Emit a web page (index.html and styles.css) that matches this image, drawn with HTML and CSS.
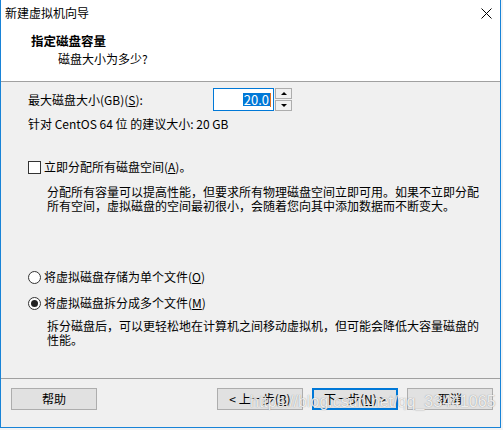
FILE: index.html
```html
<!DOCTYPE html>
<html lang="zh-CN">
<head>
    <meta charset="UTF-8">
    <title>新建虚拟机向导</title>
    <link rel="stylesheet" href="styles.css">
</head>
<body>
    <div class="window">
        <div class="titleBar">
            <span class="titleText">新建虚拟机向导</span>
            <svg class="closeIcon" width="11" height="11" viewBox="0 0 11 11">
                <path d="M0.5 0.5 L10.5 10.5 M10.5 0.5 L0.5 10.5" stroke="#000" stroke-width="1" fill="none"/>
            </svg>
        </div>

        <div class="header">
            <div class="headTitle">指定磁盘容量</div>
            <div class="headSub">磁盘大小为多少?</div>
        </div>

        <div class="content">
            <div class="sizeRow">
                <span class="sizeLabel">最大磁盘大小(GB)(<u>S</u>):</span>
                <div class="numBox"><span class="selected">20.0</span><span class="caret"></span></div>
                <div class="spinner">
                    <div class="spinBtn"><span class="arrowUp"></span></div>
                    <div class="spinBtn"><span class="arrowDown"></span></div>
                </div>
            </div>
            <div class="recommend">针对 CentOS 64 位 的建议大小: 20 GB</div>

            <div class="checkRow">
                <span class="checkBox"></span>
                <span>立即分配所有磁盘空间(<u>A</u>)。</span>
            </div>
            <div class="desc first">分配所有容量可以提高性能，但要求所有物理磁盘空间立即可用。如果不立即分配所有空间，虚拟磁盘的空间最初很小，会随着您向其中添加数据而不断变大。</div>

            <div class="radioRow single">
                <span class="radio"></span>
                <span>将虚拟磁盘存储为单个文件(<u>O</u>)</span>
            </div>
            <div class="radioRow multi">
                <span class="radio checked"></span>
                <span>将虚拟磁盘拆分成多个文件(<u>M</u>)</span>
            </div>
            <div class="desc second">拆分磁盘后，可以更轻松地在计算机之间移动虚拟机，但可能会降低大容量磁盘的性能。</div>
        </div>

        <div class="footer">
            <button class="btn">帮助</button>
            <div class="btnGroup">
                <button class="btn">&lt; 上一步(<u>B</u>)</button>
                <button class="btn primary">下一步(<u>N</u>) &gt;</button>
                <button class="btn">取消</button>
            </div>
            <div class="watermark">https://blog.csdn.net/qq_33441065</div>
        </div>
    </div>
</body>
</html>
```

FILE: styles.css
```css
body {
    margin: 0;
    background: #f3f3f3;
    font-family: "Noto Sans CJK SC", "Noto Sans", sans-serif;
    font-size: 12px;
    color: #000;
}
u {
    text-decoration: underline;
    text-underline-offset: 1px;
}
.window {
    width: 501px;
    height: 428px;
    box-sizing: border-box;
    border: 1px solid #1883d7;
    border-top: none;
    background: #f0f0f0;
    display: flex;
    flex-direction: column;
    position: relative;
}
.titleBar {
    height: 26px;
    background: #fff;
    display: flex;
    align-items: center;
    justify-content: space-between;
    padding-left: 4px;
    line-height: 18px;
}
.closeIcon {
    margin-right: 8px;
}
.header {
    height: 49px;
    background: #fff;
    padding: 6px 0 0 30px;
    border-bottom: 1px solid #a0a0a0;
    line-height: 18px;
}
.headTitle {
    font-weight: 700;
    font-size: 12.5px;
}
.headSub {
    padding-left: 27px;
}
.content {
    flex: 1;
    padding-left: 27px;
    line-height: 18px;
}
.sizeRow {
    margin-top: 6px;
    height: 23px;
    display: flex;
    align-items: center;
}
.sizeLabel {
    width: 185px;
}
.numBox {
    width: 61px;
    height: 23px;
    box-sizing: border-box;
    border: 1px solid #0078d7;
    background: #fff;
    display: flex;
    align-items: center;
    justify-content: flex-end;
    padding-right: 2px;
}
.selected {
    background: #0078d7;
    color: #fff;
    line-height: 13px;
    font-size: 13px;
    padding: 0 1px;
}
.caret {
    width: 1px;
    height: 14px;
    background: #e07020;
}
.spinner {
    margin-left: 1px;
    width: 17px;
    height: 23px;
    display: flex;
    flex-direction: column;
    gap: 1px;
}
.spinBtn {
    flex: 1;
    box-sizing: border-box;
    border: 1px solid #adadad;
    background: #f0f0f0;
    display: flex;
    align-items: center;
    justify-content: center;
}
.arrowUp, .arrowDown {
    width: 0;
    height: 0;
    border-left: 3px solid transparent;
    border-right: 3px solid transparent;
}
.arrowUp {
    border-bottom: 3px solid #000;
}
.arrowDown {
    border-top: 3px solid #000;
}
.recommend {
    margin-top: 4px;
}
.checkRow, .radioRow {
    display: flex;
    align-items: center;
    gap: 3px;
    height: 18px;
}
.checkRow {
    margin-top: 25px;
}
.checkBox {
    width: 13px;
    height: 13px;
    box-sizing: border-box;
    border: 1px solid #333;
    background: #fff;
}
.radio {
    width: 13px;
    height: 13px;
    box-sizing: border-box;
    border: 1px solid #333;
    border-radius: 50%;
    background: #fff;
    display: flex;
    align-items: center;
    justify-content: center;
}
.radio.checked::after {
    content: "";
    width: 7px;
    height: 7px;
    border-radius: 50%;
    background: #222;
}
.desc {
    padding-left: 19px;
    width: 438px;
    line-height: 14px;
}
.desc.first {
    margin-top: 9px;
}
.radioRow.single {
    margin-top: 55px;
}
.radioRow.multi {
    margin-top: 8px;
}
.desc.second {
    margin-top: 7px;
}
.footer {
    height: 39px;
    border-top: 1px solid #a0a0a0;
    display: flex;
    align-items: flex-start;
    padding: 9px 7px 0 10px;
    position: relative;
}
.btnGroup {
    margin-left: auto;
    display: flex;
    gap: 9px;
}
.btn {
    width: 86px;
    height: 22px;
    box-sizing: border-box;
    border: 1px solid #adadad;
    background: #e1e1e1;
    font-family: inherit;
    font-size: 12px;
    color: #000;
    padding: 0;
    line-height: 18px;
}
.btn.primary {
    border: 2px solid #0078d7;
}
.watermark {
    position: absolute;
    left: 249px;
    top: 14px;
    font-family: "Liberation Sans", Arial, sans-serif;
    font-size: 16px;
    line-height: 18px;
    color: rgba(255, 255, 255, 0.85);
    text-shadow: 0 0 1px rgba(90, 90, 90, 0.7);
    white-space: nowrap;
    pointer-events: none;
}
```
